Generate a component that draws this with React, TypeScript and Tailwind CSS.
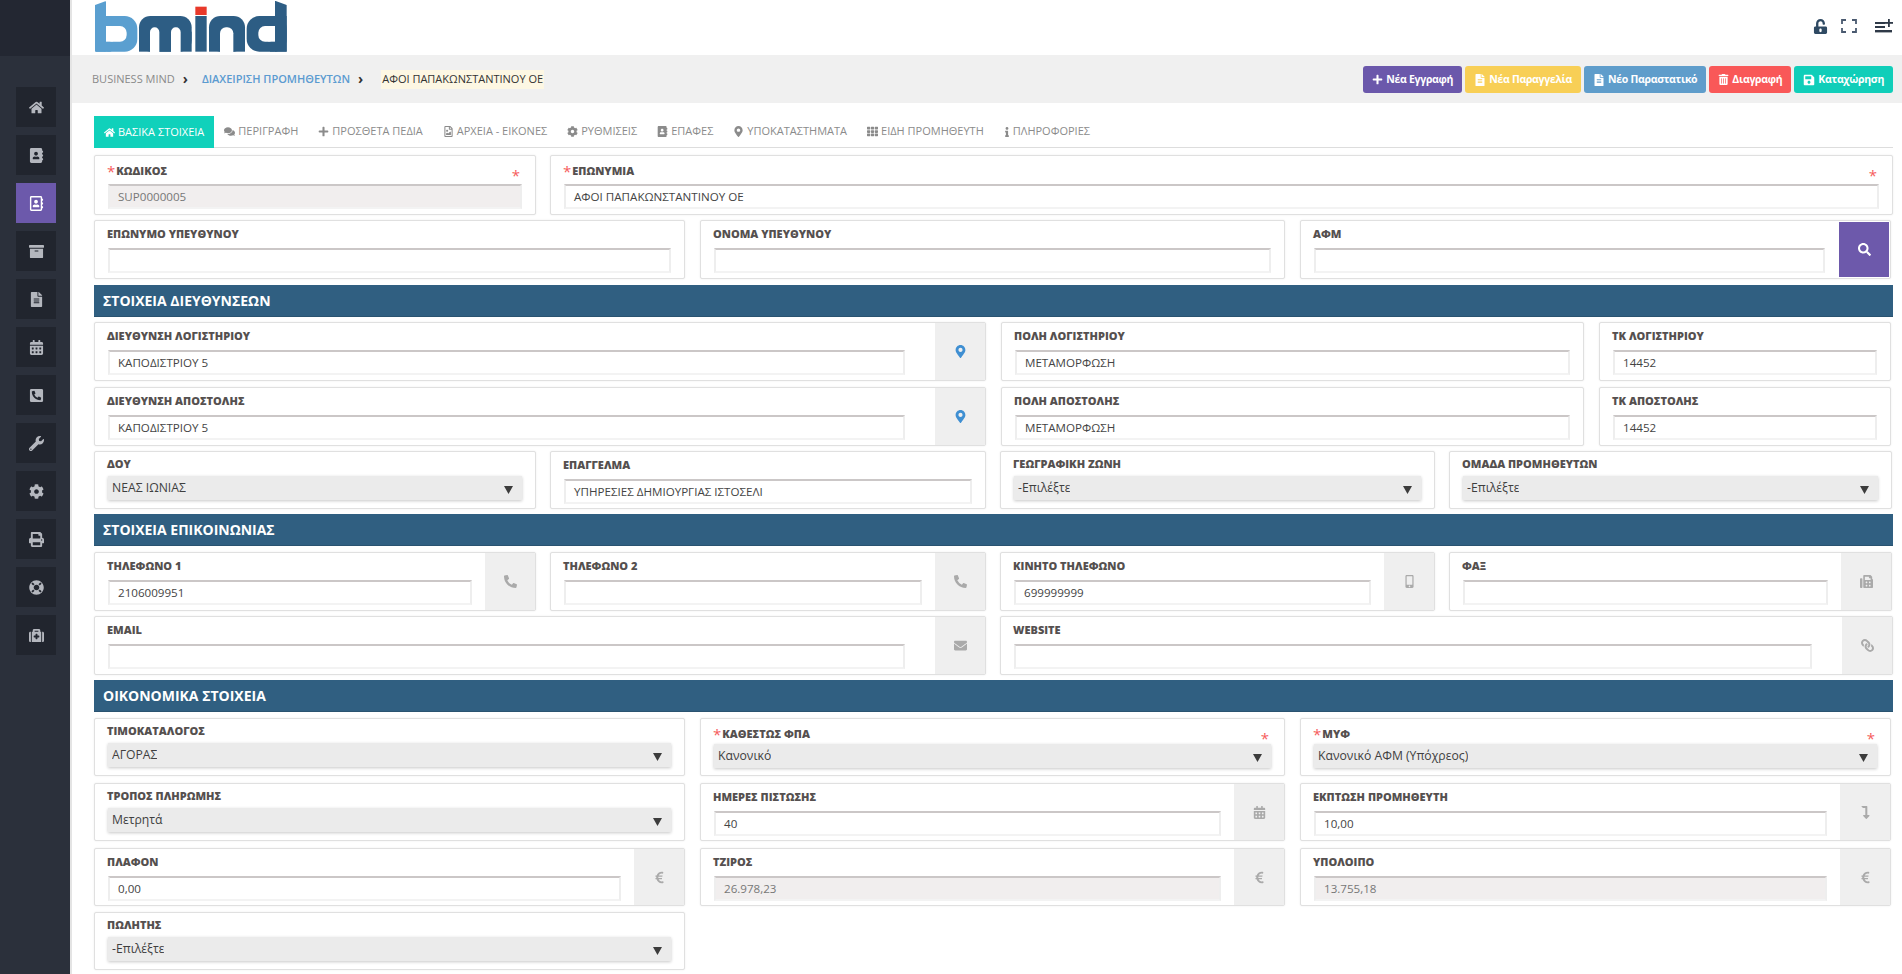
import React from "react";
import {
  FaHome, FaAddressBook, FaRegAddressBook, FaArchive, FaFileAlt, FaCalendarAlt, FaPhoneSquareAlt, FaWrench, FaCog,
  FaPrint, FaLifeRing, FaMedkit, FaPlus, FaTrashAlt, FaSave, FaComments, FaRegFileImage, FaMapMarkerAlt, FaTh, FaInfo,
  FaSearch, FaPhoneAlt, FaMobileAlt, FaFax, FaEnvelope, FaLink, FaLevelDownAlt, FaEuroSign, FaUnlockAlt,
} from "react-icons/fa";

const sideIcons = [FaHome, FaAddressBook, FaRegAddressBook, FaArchive, FaFileAlt, FaCalendarAlt, FaPhoneSquareAlt, FaWrench, FaCog, FaPrint, FaLifeRing, FaMedkit];

const tabs = [
  { label: "ΠΕΡΙΓΡΑΦΗ", icon: FaComments },
  { label: "ΠΡΟΣΘΕΤΑ ΠΕΔΙΑ", icon: FaPlus },
  { label: "ΑΡΧΕΙΑ - ΕΙΚΟΝΕΣ", icon: FaRegFileImage },
  { label: "ΡΥΘΜΙΣΕΙΣ", icon: FaCog },
  { label: "ΕΠΑΦΕΣ", icon: FaAddressBook },
  { label: "ΥΠΟΚΑΤΑΣΤΗΜΑΤΑ", icon: FaMapMarkerAlt },
  { label: "ΕΙΔΗ ΠΡΟΜΗΘΕΥΤΗ", icon: FaTh },
];

function Logo() {
  return (
    <svg viewBox="0 0 615 168" className="w-[205px] h-[56px] ml-[-10px]" aria-label="bmind">
      <g fill="#5a9fd0">
        <rect x="15" y="3" width="33" height="152" rx="3" />
        <rect x="15" y="48" width="127" height="107" rx="38" />
        <rect x="15" y="48" width="50" height="107" rx="4" />
      </g>
      <rect x="48" y="78" width="62" height="47" rx="20" fill="#fff" />
      <rect x="48" y="78" width="20" height="47" fill="#fff" />
      <rect x="0" y="-40" width="80" height="55" fill="#fff" transform="rotate(-20 15 15)" />
      <g fill="#2d5d84">
        <rect x="147" y="48" width="158" height="107" rx="34" />
        <rect x="147" y="95" width="158" height="60" />
        <rect x="316" y="48" width="34" height="107" />
        <rect x="357" y="48" width="108" height="107" rx="34" />
        <rect x="357" y="95" width="108" height="60" />
        <rect x="555" y="3" width="35" height="152" />
        <rect x="470" y="48" width="120" height="107" rx="38" />
        <rect x="540" y="48" width="50" height="107" />
      </g>
      <rect x="180" y="82" width="28" height="90" rx="14" fill="#fff" />
      <rect x="243" y="82" width="29" height="90" rx="14" fill="#fff" />
      <rect x="390" y="82" width="40" height="90" rx="18" fill="#fff" />
      <rect x="505" y="78" width="50" height="47" rx="20" fill="#fff" />
      <rect x="535" y="78" width="20" height="47" fill="#fff" />
      <rect x="530" y="-40" width="80" height="55" fill="#fff" transform="rotate(20 590 15)" />
      <rect x="316" y="20" width="34" height="25" fill="#e8392a" />
    </svg>
  );
}

function Sidebar() {
  return (
    <aside className="w-[72px] shrink-0 bg-[#2b303b] border-r-2 border-[#e4e4e4]">
      <div className="h-[56px] bg-[#232732]" />
      <div className="flex flex-col gap-[8px] pl-[16px] pt-[31px]">
        {sideIcons.map((Icon, i) => (
          <div key={i} className={`w-[40px] h-[40px] flex items-center justify-center ${i === 2 ? "bg-[#6c59ab] text-white" : "bg-[#21252e] text-[#b4b7be]"}`}>
            <Icon className="text-[15px]" />
          </div>
        ))}
      </div>
    </aside>
  );
}

type FieldProps = {
  label: string;
  value?: string;
  req?: boolean;
  select?: boolean;
  disabled?: boolean;
  addon?: React.ReactNode;
  purple?: boolean;
  wide?: boolean;
};

function Field({ label, value, req, select, disabled, addon, purple, wide }: FieldProps) {
  return (
    <div className="relative flex h-full border border-[#e0e0e0] rounded-[2px] shadow-[0_0_2px_rgba(0,0,0,0.08)] bg-white overflow-hidden">
      <div className={`flex-1 min-w-0 flex flex-col pl-[12px] ${addon && wide ? "pr-[30px]" : "pr-[13px]"}`}>
        <div className={`${req ? "pt-[7px]" : select ? "pt-[2px]" : "pt-[3px]"} h-[22px] flex items-center text-[11px] leading-[14px] font-extrabold text-[#55504f] whitespace-nowrap`}>
          {req && <span className="text-[15px] leading-[10px] mr-[1px] text-[#f65c5c] font-normal">*</span>}
          {label}
        </div>
        {select ? (
          <div className={`ml-[1px] ${req ? "mt-[3px]" : "mt-[2px]"} h-[24px] flex items-center justify-between pl-[4px] pr-[9px] bg-[#ebebeb] shadow-[0_1px_3px_rgba(0,0,0,0.22)] text-[12.2px] text-[#3f3f3f]`}>
            <span className="truncate">{value}</span>
            <svg width="9" height="8" viewBox="0 0 9 8" className="mt-[3px]"><path d="M0 0h9L4.5 8z" fill="#3c3c3c" /></svg>
          </div>
        ) : (
          <div className={`ml-[1px] ${req ? "mt-[6px]" : "mt-[5px]"} h-[25px] flex items-center pl-[8px] border-t-2 border-t-[#cbc7c7] border-x-2 border-x-[#eeeeee] border-b-2 border-b-[#f3f3f3] text-[11.6px] ${disabled ? "bg-[#f1eeee] text-[#777]" : "bg-white text-[#444]"}`}>
            {value}
          </div>
        )}
      </div>
      {addon && (
        <div className={`w-[50px] shrink-0 flex items-center justify-center text-[13px] ${purple ? "bg-[#6d59ab] text-white m-[1px]" : "bg-[#efefef] text-[#aaaaaa]"}`}>
          {addon}
        </div>
      )}
      {req && <span className="absolute right-[15px] top-[12px] text-[15px] leading-[15px] text-[#f65c5c]">*</span>}
    </div>
  );
}

function Section({ title, className = "" }: { title: string; className?: string }) {
  return (
    <div className={`h-[32px] flex items-center pl-[9px] bg-[#305f81] border-b border-[#2a5370] text-white font-bold text-[14px] ${className}`}>
      {title}
    </div>
  );
}

const row3 = "grid grid-cols-[591px_585px_591px] gap-x-[15px] h-[59px]";
const finRow = "grid grid-cols-[591px_585px_591px] gap-x-[15px] h-[58px]";
const rowAddr = "grid grid-cols-[892px_583px_292px] gap-x-[15px] h-[59px]";
const rowFour = "grid grid-cols-[442px_436px_435px_443px] gap-x-[14px] h-[59px]";

const pin = <FaMapMarkerAlt className="text-[#3f8fd2]" />;
const btn = "h-[27px] px-[9px] rounded-[3px] flex items-center gap-[3px]";

export default function App() {
  return (
    <div className="flex h-[974px] overflow-hidden bg-white font-['Open_Sans',sans-serif]">
      <Sidebar />
      <main className="flex-1 min-w-0 flex flex-col">
        <header className="h-[55px] shrink-0 flex items-start justify-between pl-[28px] pr-[9px]">
          <Logo />
          <div className="flex items-center gap-[15px] mt-[19px] h-[14px] text-[#2f4a63]">
            <FaUnlockAlt className="text-[15px] mr-[-2px]" />
            <svg width="16" height="14" viewBox="0 0 16 14" fill="none" stroke="#4a5a70" strokeWidth="1.8">
              <path d="M1 5V1h4M11 1h4v4M15 9v4h-4M5 13H1V9" />
            </svg>
            <svg width="18" height="14" viewBox="0 0 18 14" className="ml-[3px]" fill="#2f3a48">
              <rect x="0" y="3" width="10" height="2" />
              <rect x="0" y="7" width="10" height="2" />
              <rect x="0" y="11" width="17" height="2.4" />
              <rect x="13" y="0" width="1.8" height="8" />
              <rect x="10" y="3" width="8" height="1.8" />
            </svg>
          </div>
        </header>
        <div className="h-[48px] shrink-0 flex items-center justify-between bg-[#f0f0f0] pl-[20px] pr-[9px]">
          <div className="flex items-center text-[11px]">
            <span className="text-[#8a8a8a]">BUSINESS MIND</span>
            <span className="ml-[8px] text-[#333] text-[14px] font-bold leading-none">›</span>
            <span className="ml-[14px] text-[#5b9bd0] font-semibold">ΔΙΑΧΕΙΡΙΣΗ ΠΡΟΜΗΘΕΥΤΩΝ</span>
            <span className="ml-[8px] text-[#333] text-[14px] font-bold leading-none">›</span>
            <span className="ml-[18px] h-[19px] px-[1px] flex items-center bg-[#fdf7e3] text-[#333]">ΑΦΟΙ ΠΑΠΑΚΩΝΣΤΑΝΤΙΝΟΥ ΟΕ</span>
          </div>
          <div className="flex gap-[3px] pt-px text-[10.5px] font-bold tracking-[-0.3px] text-white">
            <button className={`${btn} bg-[#6b58ab]`}><FaPlus className="text-[11px]" />Νέα Εγγραφή</button>
            <button className={`${btn} bg-[#f8cf56]`}><FaFileAlt className="text-[12px]" />Νέα Παραγγελία</button>
            <button className={`${btn} bg-[#5f9dcb]`}><FaFileAlt className="text-[12px]" />Νέο Παραστατικό</button>
            <button className={`${btn} bg-[#f95858]`}><FaTrashAlt className="text-[11px]" />Διαγραφή</button>
            <button className={`${btn} bg-[#10ceb9]`}><FaSave className="text-[12px]" />Καταχώρηση</button>
          </div>
        </div>

        <div className="flex-1 flex flex-col pl-[22px] pr-[9px] pt-[13px]">
          <div className="h-[32px] flex border-b border-[#dddddd] text-[11px] text-[#8b8b8b]">
            <div className="h-[32px] flex items-center gap-[3px] px-[10px] bg-[#10d1bb] text-white">
              <FaHome className="text-[11px]" />ΒΑΣΙΚΑ ΣΤΟΙΧΕΙΑ
            </div>
            {tabs.map((t) => (
              <div key={t.label} className="flex items-center gap-[3px] px-[10px]">
                <t.icon className="text-[11px]" />{t.label}
              </div>
            ))}
            <div className="flex items-center gap-[3px] px-[10px]">
              <FaInfo className="text-[10px] w-[6px]" />ΠΛΗΡΟΦΟΡΙΕΣ
            </div>
          </div>

          <div className="flex flex-col gap-[5px] mt-[7px]">
            <div className="grid grid-cols-[442px_1343px] gap-x-[14px] h-[60px]">
              <Field label="ΚΩΔΙΚΟΣ" value="SUP0000005" req disabled />
              <Field label="ΕΠΩΝΥΜΙΑ" value="ΑΦΟΙ ΠΑΠΑΚΩΝΣΤΑΝΤΙΝΟΥ ΟΕ" req />
            </div>
            <div className={row3}>
              <Field label="ΕΠΩΝΥΜΟ ΥΠΕΥΘΥΝΟΥ" />
              <Field label="ΟΝΟΜΑ ΥΠΕΥΘΥΝΟΥ" />
              <Field label="ΑΦΜ" addon={<FaSearch />} purple />
            </div>
            <Section title="ΣΤΟΙΧΕΙΑ ΔΙΕΥΘΥΝΣΕΩΝ" className="mt-px" />
            <div className={rowAddr}>
              <Field label="ΔΙΕΥΘΥΝΣΗ ΛΟΓΙΣΤΗΡΙΟΥ" value="ΚΑΠΟΔΙΣΤΡΙΟΥ 5" addon={pin} wide />
              <Field label="ΠΟΛΗ ΛΟΓΙΣΤΗΡΙΟΥ" value="ΜΕΤΑΜΟΡΦΩΣΗ" />
              <Field label="ΤΚ ΛΟΓΙΣΤΗΡΙΟΥ" value="14452" />
            </div>
            <div className={`${rowAddr} mt-px`}>
              <Field label="ΔΙΕΥΘΥΝΣΗ ΑΠΟΣΤΟΛΗΣ" value="ΚΑΠΟΔΙΣΤΡΙΟΥ 5" addon={pin} wide />
              <Field label="ΠΟΛΗ ΑΠΟΣΤΟΛΗΣ" value="ΜΕΤΑΜΟΡΦΩΣΗ" />
              <Field label="ΤΚ ΑΠΟΣΤΟΛΗΣ" value="14452" />
            </div>
            <div className={`${rowFour} !h-[58px]`}>
              <Field label="ΔΟΥ" value="ΝΕΑΣ ΙΩΝΙΑΣ" select />
              <Field label="ΕΠΑΓΓΕΛΜΑ" value="ΥΠΗΡΕΣΙΕΣ ΔΗΜΙΟΥΡΓΙΑΣ ΙΣΤΟΣΕΛΙ" />
              <Field label="ΓΕΩΓΡΑΦΙΚΗ ΖΩΝΗ" value="-Επιλέξτε" select />
              <Field label="ΟΜΑΔΑ ΠΡΟΜΗΘΕΥΤΩΝ" value="-Επιλέξτε" select />
            </div>
            <Section title="ΣΤΟΙΧΕΙΑ ΕΠΙΚΟΙΝΩΝΙΑΣ" />
            <div className={`${rowFour} mt-px`}>
              <Field label="ΤΗΛΕΦΩΝΟ 1" value="2106009951" addon={<FaPhoneAlt />} />
              <Field label="ΤΗΛΕΦΩΝΟ 2" addon={<FaPhoneAlt />} />
              <Field label="ΚΙΝΗΤΟ ΤΗΛΕΦΩΝΟ" value="699999999" addon={<FaMobileAlt />} />
              <Field label="ΦΑΞ" addon={<FaFax />} />
            </div>
            <div className="grid grid-cols-[892px_893px] gap-x-[14px] h-[59px]">
              <Field label="EMAIL" addon={<FaEnvelope />} wide />
              <Field label="WEBSITE" addon={<FaLink className="-scale-x-100" />} wide />
            </div>
            <Section title="ΟΙΚΟΝΟΜΙΚΑ ΣΤΟΙΧΕΙΑ" />
            <div className={`${finRow} mt-px`}>
              <Field label="ΤΙΜΟΚΑΤΑΛΟΓΟΣ" value="ΑΓΟΡΑΣ" select />
              <Field label="ΚΑΘΕΣΤΩΣ ΦΠΑ" value="Κανονικό" select req />
              <Field label="ΜΥΦ" value="Κανονικό ΑΦΜ (Υπόχρεος)" select req />
            </div>
            <div className={`${finRow} mt-[2px]`}>
              <Field label="ΤΡΟΠΟΣ ΠΛΗΡΩΜΗΣ" value="Μετρητά" select />
              <Field label="ΗΜΕΡΕΣ ΠΙΣΤΩΣΗΣ" value="40" addon={<FaCalendarAlt />} />
              <Field label="ΕΚΠΤΩΣΗ ΠΡΟΜΗΘΕΥΤΗ" value="10,00" addon={<FaLevelDownAlt />} />
            </div>
            <div className={`${finRow} mt-[2px]`}>
              <Field label="ΠΛΑΦΟΝ" value="0,00" addon={<FaEuroSign />} />
              <Field label="ΤΖΙΡΟΣ" value="26.978,23" disabled addon={<FaEuroSign />} />
              <Field label="ΥΠΟΛΟΙΠΟ" value="13.755,18" disabled addon={<FaEuroSign />} />
            </div>
            <div className={`${finRow} mt-px`}>
              <Field label="ΠΩΛΗΤΗΣ" value="-Επιλέξτε" select />
            </div>
          </div>
        </div>
      </main>
    </div>
  );
}
